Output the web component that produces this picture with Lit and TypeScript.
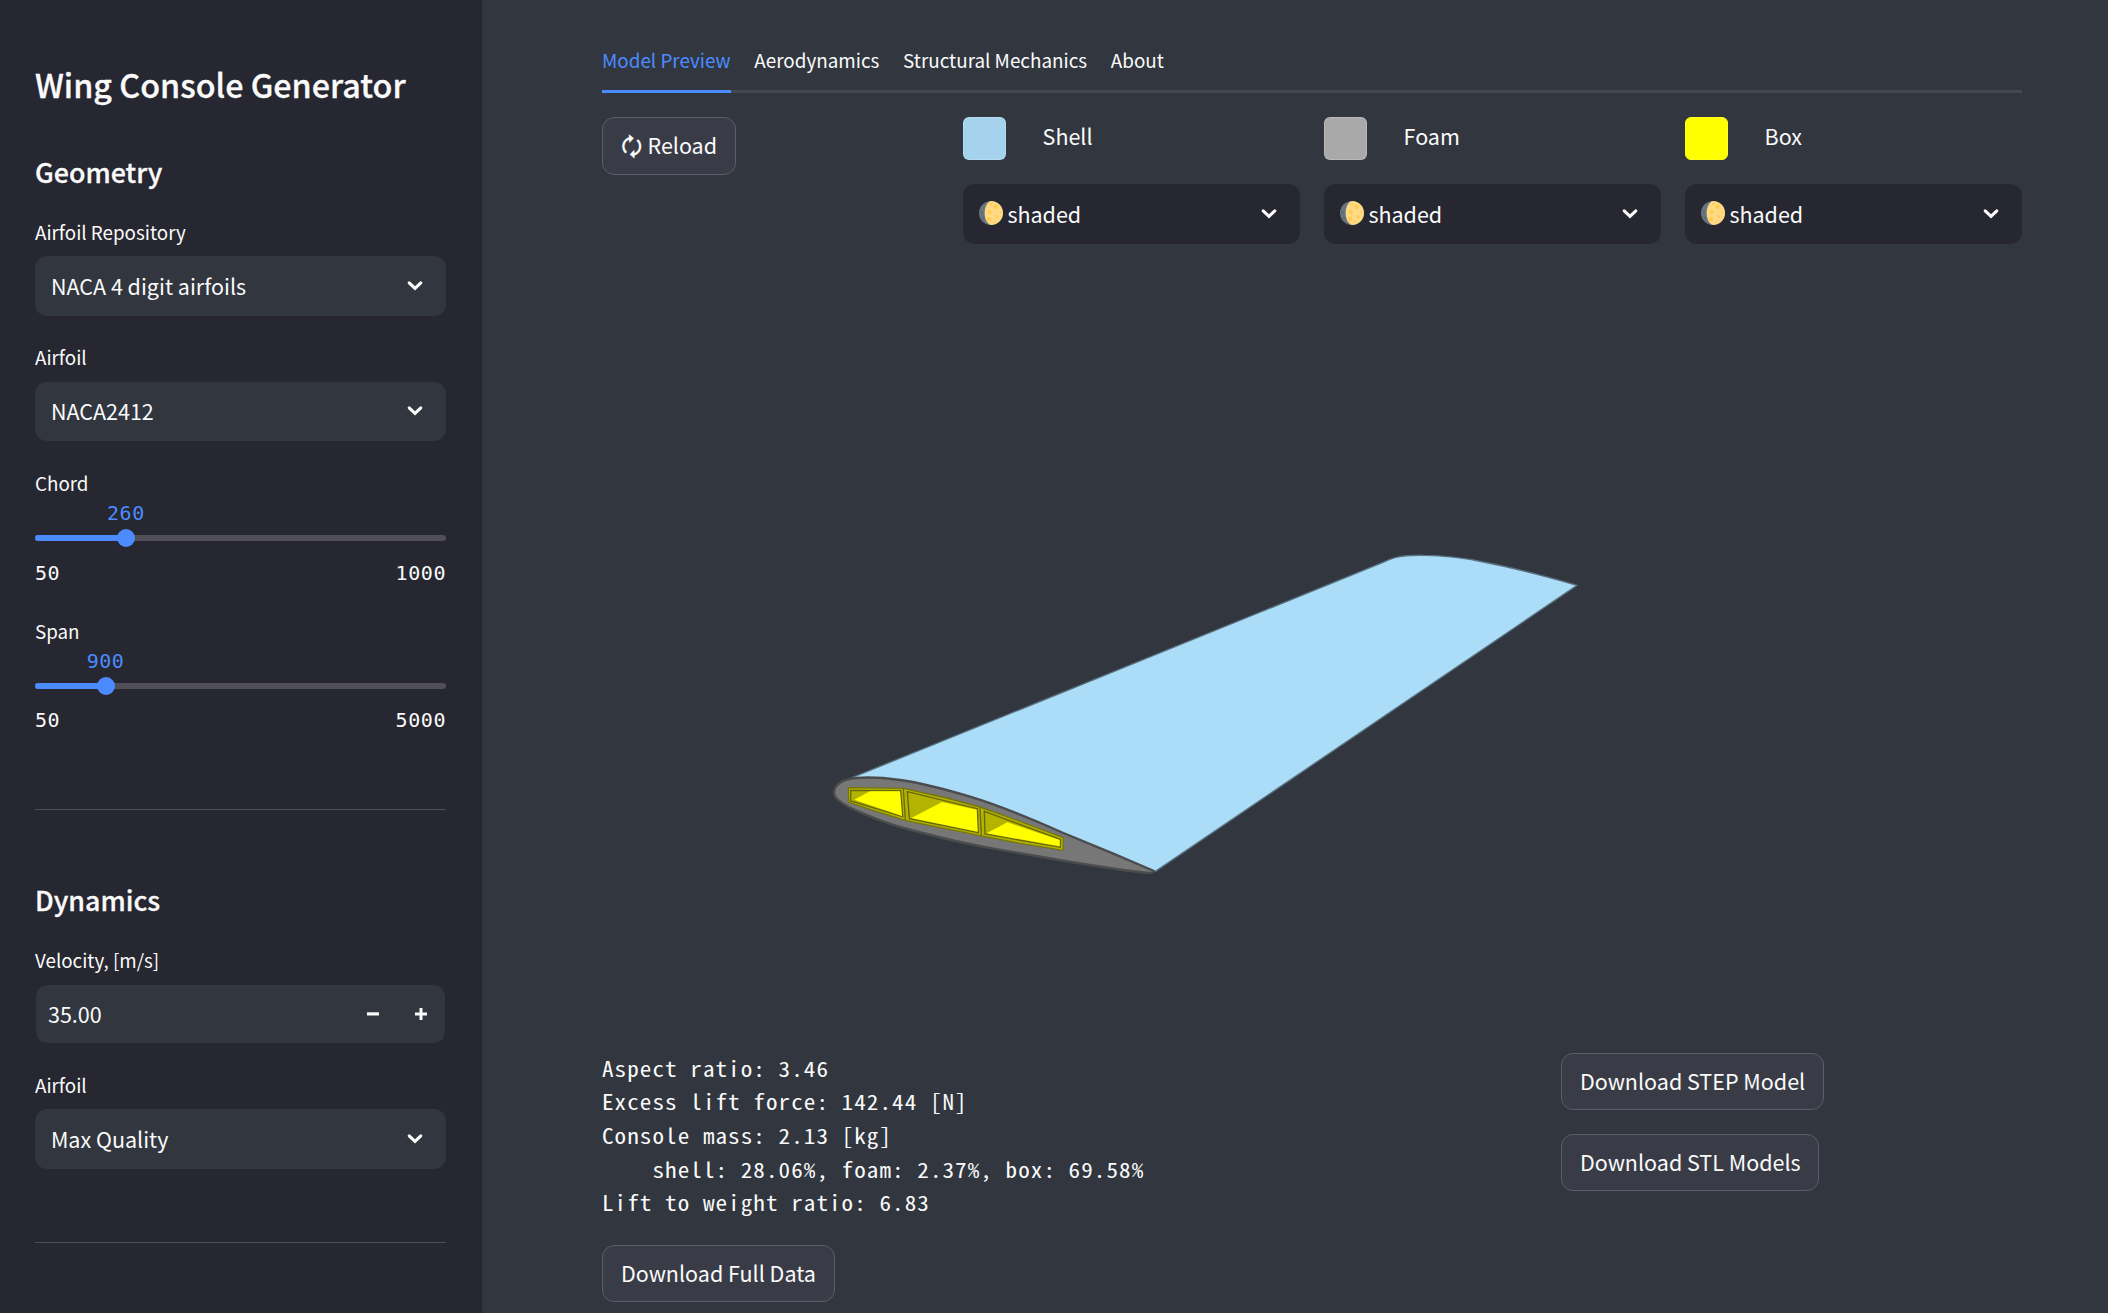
import { LitElement, html, css, svg } from "lit";
import { customElement, property } from "lit/decorators.js";

const chevron = html`<svg width="16" height="12" viewBox="0 0 16 12" fill="none" stroke="#fafafa" stroke-width="3.1" stroke-linecap="round">
  <path d="M2.2 2.8 8 8.4l5.8-5.6" />
</svg>`;

const moon = html`<svg width="24" height="24" viewBox="0 0 36 36">
  <circle cx="18" cy="18" r="18" fill="#66757f" />
  <circle cx="3.6" cy="17" r="1.8" fill="#5b6876" />
  <circle cx="6" cy="26" r="1.8" fill="#5b6876" />
  <path fill="#ffd983" d="M18 0c9.9 0 18 8.1 18 18s-8.1 18-18 18C12 34.5 8.5 27 8.5 18S12 1.5 18 0z" />
  <g fill="#ffcc4d">
    <circle cx="16" cy="16.5" r="3" />
    <circle cx="25" cy="9" r="3.2" />
    <circle cx="15" cy="27" r="3.2" />
    <circle cx="27" cy="23.5" r="2.2" />
    <circle cx="18" cy="5" r="1.6" />
    <circle cx="32" cy="17" r="1.6" />
    <circle cx="23" cy="31" r="1.4" />
  </g>
</svg>`;

@customElement("wing-select")
class WingSelect extends LitElement {
  @property() value = "";
  @property({ type: Boolean }) shaded = false;

  static styles = css`
    :host {
      display: flex;
      align-items: center;
      height: 59.6px;
      box-sizing: border-box;
      padding: 0 22.6px 0 15.9px;
      border-radius: 12px;
      font-size: 21.5px;
      line-height: 30px;
      color: #fafafa;
    }
    .text {
      flex: 1;
    }
    .moon {
      display: flex;
      margin: -1px 4px 0 0.5px;
    }
    .arrow {
      display: flex;
    }
  `;

  render() {
    return html`
      ${this.shaded ? html`<span class="moon">${moon}</span>` : null}
      <span class="text">${this.value}</span>
      <span class="arrow">${chevron}</span>
    `;
  }
}

@customElement("wing-slider")
class WingSlider extends LitElement {
  @property() label = "";
  @property({ type: Number }) min = 0;
  @property({ type: Number }) max = 100;
  @property({ type: Number }) value = 0;

  static styles = css`
    :host {
      display: block;
      color: #fafafa;
    }
    .label {
      font-size: 18.8px;
      line-height: 30px;
    }
    .rail {
      position: relative;
      height: 6px;
      margin-top: 37.2px;
      border-radius: 3px;
      background: #504f58;
    }
    .fill {
      height: 6px;
      border-radius: 3px 0 0 3px;
      background: #4c8bff;
    }
    .thumb {
      position: absolute;
      top: -6px;
      width: 18px;
      height: 18px;
      margin-left: -9px;
      border-radius: 50%;
      background: #4c8bff;
    }
    .mono {
      font-family: "DejaVu Sans Mono", monospace;
      font-size: 20px;
      line-height: 24px;
      letter-spacing: 0.56px;
    }
    .current {
      position: absolute;
      top: -34px;
      color: #4c8bff;
      transform: translateX(-50%);
    }
    .ticks {
      display: flex;
      justify-content: space-between;
      height: 24px;
      margin-top: var(--tick-gap, 20.6px);
    }
  `;

  render() {
    const pos = ((this.value - this.min) / (this.max - this.min)) * 100;
    return html`
      <div class="label">${this.label}</div>
      <div class="rail">
        <div class="fill" style="width:${pos}%"></div>
        <div class="thumb" style="left:${pos}%"></div>
        <div class="mono current" style="left:${pos}%">${this.value}</div>
      </div>
      <div class="ticks">
        <span class="mono">${this.min}</span>
        <span class="mono">${this.max}</span>
      </div>
    `;
  }
}

@customElement("wing-model")
class WingModel extends LitElement {
  static styles = css`
    :host {
      display: block;
    }
    .scene {
      display: block;
      width: 1420px;
      height: 775px;
    }
  `;

  render() {
    const walls = [
      "M92 751 242 752 248 830 92 783z",
      "M262 755 472 806 475 878 268 836z",
      "M493 814 722 898 721 922 495 882z",
    ];
    const lit = [
      "M103 779 150 754 240 754 246 828z",
      "M274 834 366 786 470 809 473 875z",
      "M500 880 562 847 719 900 719 919z",
    ];
    return html`<svg class="scene" viewBox="-654 -840 4260 2325">
      <path
        fill="#abddf9" stroke="#59717f" stroke-width="4" stroke-linejoin="round"
        d="M96 713 1689 67Q1708 58 1725 53C1755 46 1780 45 1812 46C1860 46 1930 53 1990 66C2070 81 2180 110 2271 136L1005 995 100 780z"
      />
      <path
        fill="#777777" stroke="#4b4c4e" stroke-width="7" stroke-linejoin="round"
        d="M42 757C43 733 70 716 110 714C145 711 190 713 240 720C300 728 380 749 450 770C540 797 640 839 730 879L880 941 1002 993Q1000 999 985 999C940 995 800 974 700 957L500 922C430 909 380 898 320 882C250 866 180 843 130 821C80 801 41 779 42 757z"
      />
      <path
        fill="#b3b300" stroke="#76760c" stroke-width="4"
        d="M85 743 250 745 380 774 480 801 600 844 730 893 729 931 600 910 480 887 258 842 150 808 86 787z"
      />
      <path d="M250 747 256 840M480 803 484 886" stroke="#6c6c10" stroke-width="4" />
      ${walls.map((d) => svg`<path d=${d} fill="#b3b300" stroke="#67670e" stroke-width="4" />`)}
      ${lit.map((d) => svg`<path d=${d} fill="#ffff00" />`)}
    </svg>`;
  }
}

@customElement("app-root")
class AppRoot extends LitElement {
  static styles = css`
    :host {
      display: flex;
      width: 2108px;
      height: 1313px;
      overflow: hidden;
      background: #31363f;
      color: #fafafa;
      font-family: "Noto Sans CJK SC", "Open Sans", sans-serif;
      font-size: 21.5px;
      line-height: 30px;
    }
    .sidebar {
      width: 482px;
      box-sizing: border-box;
      padding: 62px 36px 0 35px;
      background: #262730;
    }
    h1,
    h2 {
      margin: 0;
      font-weight: 500;
      -webkit-text-stroke: 0.3px #fafafa;
    }
    h1 {
      font-size: 32.3px;
      line-height: 44px;
    }
    h2 {
      margin-bottom: 27.3px;
      padding-top: 0.7px;
      font-size: 26.8px;
      line-height: 36px;
    }
    .geometry {
      margin-top: 47px;
    }
    .field {
      margin-bottom: 26.2px;
    }
    .label {
      margin-bottom: 9.4px;
      font-size: 18.8px;
      line-height: 30px;
    }
    .field wing-select {
      background: #31363f;
    }
    .chord {
      margin-top: 26.5px;
    }
    .span {
      --tick-gap: 19px;
      margin-top: 30.3px;
    }
    hr {
      height: 1px;
      margin: 0;
      border: 0;
      background: #4c4d55;
    }
    .first-rule {
      margin-top: 77.4px;
      margin-bottom: 71px;
    }
    .last-rule {
      margin-top: 73.2px;
    }
    .number {
      display: flex;
      align-items: center;
      height: 59.6px;
      box-sizing: border-box;
      margin-top: -0.5px;
      padding: 0 18px 0 12px;
      border: 1px solid #262730;
      border-radius: 12px;
      background: #31363f;
      background-clip: padding-box;
    }
    .amount {
      flex: 1;
    }
    .step {
      display: block;
      margin-left: 36px;
    }
    .main {
      width: 1420px;
      padding-left: 120px;
    }
    .tabs {
      display: flex;
      gap: 23.7px;
      box-shadow: inset 0 -3px #464851;
      font-size: 18.85px;
    }
    .tab {
      padding: 44.5px 0 15.5px;
      border-bottom: 3px solid transparent;
    }
    .tab.active {
      color: #4c8bff;
      border-color: #4c8bff;
    }
    .controls {
      display: grid;
      grid-template-columns: repeat(4, 337px);
      gap: 24px;
      margin-top: 24px;
      align-items: start;
    }
    .button {
      display: block;
      width: max-content;
      height: 57.6px;
      box-sizing: border-box;
      margin: 0;
      padding: 0 17.6px 1.6px 17.9px;
      border: 1px solid #5b5e68;
      border-radius: 12px;
      background: #393c47;
      color: #fafafa;
      font: inherit;
      line-height: 54px;
    }
    .reload {
      display: flex;
      align-items: center;
      gap: 5.6px;
    }
    .glyph {
      font-size: 24px;
      line-height: 54px;
    }
    .part {
      display: flex;
      height: 43px;
      margin-bottom: 24px;
    }
    .swatch {
      width: 43px;
      box-sizing: border-box;
      margin-right: 36.6px;
      border: 1px solid rgba(250, 250, 250, 0.2);
      border-radius: 6px;
    }
    .shell {
      background: #a5d3ed;
    }
    .foam {
      background: #a9a9a9;
    }
    .box {
      background: #ffff00;
      border-color: #ffff1a;
    }
    .name {
      padding-top: 3.6px;
    }
    .controls wing-select {
      background: #262730;
    }
    wing-model {
      margin-top: 16px;
    }
    .footer {
      display: grid;
      grid-template-columns: 959px 1fr;
      margin-top: 17.2px;
    }
    pre {
      width: max-content;
      margin: 0 0 24.9px;
      font-family: "Noto Sans Mono CJK SC", "Liberation Mono", monospace;
      font-size: 21px;
      line-height: 33.6px;
      letter-spacing: 0.965px;
      transform: scaleX(1.1);
      transform-origin: left;
    }
    .data {
      padding-right: 18.1px;
    }
    .downloads {
      display: flex;
      flex-direction: column;
      gap: 23.6px;
      padding-top: 0.8px;
    }
  `;

  render() {
    const tabs = ["Model Preview", "Aerodynamics", "Structural Mechanics", "About"];
    const parts = [
      ["shell", "Shell"],
      ["foam", "Foam"],
      ["box", "Box"],
    ];
    const report = [
      "Aspect ratio: 3.46",
      "Excess lift force: 142.44 [N]",
      "Console mass: 2.13 [kg]",
      "    shell: 28.06%, foam: 2.37%, box: 69.58%",
      "Lift to weight ratio: 6.83",
    ].join("\n");
    return html`
      <aside class="sidebar">
        <h1>Wing Console Generator</h1>
        <h2 class="geometry">Geometry</h2>
        <div class="field">
          <div class="label">Airfoil Repository</div>
          <wing-select value="NACA 4 digit airfoils"></wing-select>
        </div>
        <div class="field">
          <div class="label">Airfoil</div>
          <wing-select value="NACA2412"></wing-select>
        </div>
        <wing-slider class="chord" label="Chord" min="50" max="1000" value="260"></wing-slider>
        <wing-slider class="span" label="Span" min="50" max="5000" value="900"></wing-slider>
        <hr class="first-rule" />
        <h2>Dynamics</h2>
        <div class="field">
          <div class="label">Velocity, [m/s]</div>
          <div class="number">
            <span class="amount">35.00</span>
            <svg class="step" width="12" height="12" viewBox="0 0 12 12" fill="#fafafa"><path d="M0 4.3h12v3.2H0z" /></svg>
            <svg class="step" width="12" height="12" viewBox="0 0 12 12" fill="#fafafa"><path d="M4.5 0h3v4.5H12v3H7.5V12h-3V7.5H0v-3h4.5z" /></svg>
          </div>
        </div>
        <div class="field">
          <div class="label">Airfoil</div>
          <wing-select value="Max Quality"></wing-select>
        </div>
        <hr class="last-rule" />
      </aside>
      <main class="main">
        <nav class="tabs">
          ${tabs.map((t, i) => html`<div class="tab ${i === 0 ? "active" : ""}">${t}</div>`)}
        </nav>
        <section class="controls">
          <button class="button reload"><span class="glyph">🗘</span><span>Reload</span></button>
          ${parts.map(
            ([key, name]) => html`<div>
              <div class="part">
                <div class="swatch ${key}"></div>
                <div class="name">${name}</div>
              </div>
              <wing-select shaded value="shaded"></wing-select>
            </div>`,
          )}
        </section>
        <wing-model></wing-model>
        <section class="footer">
          <div>
            <pre>${report}</pre>
            <button class="button data">Download Full Data</button>
          </div>
          <div class="downloads">
            <button class="button">Download STEP Model</button>
            <button class="button">Download STL Models</button>
          </div>
        </section>
      </main>
    `;
  }
}
